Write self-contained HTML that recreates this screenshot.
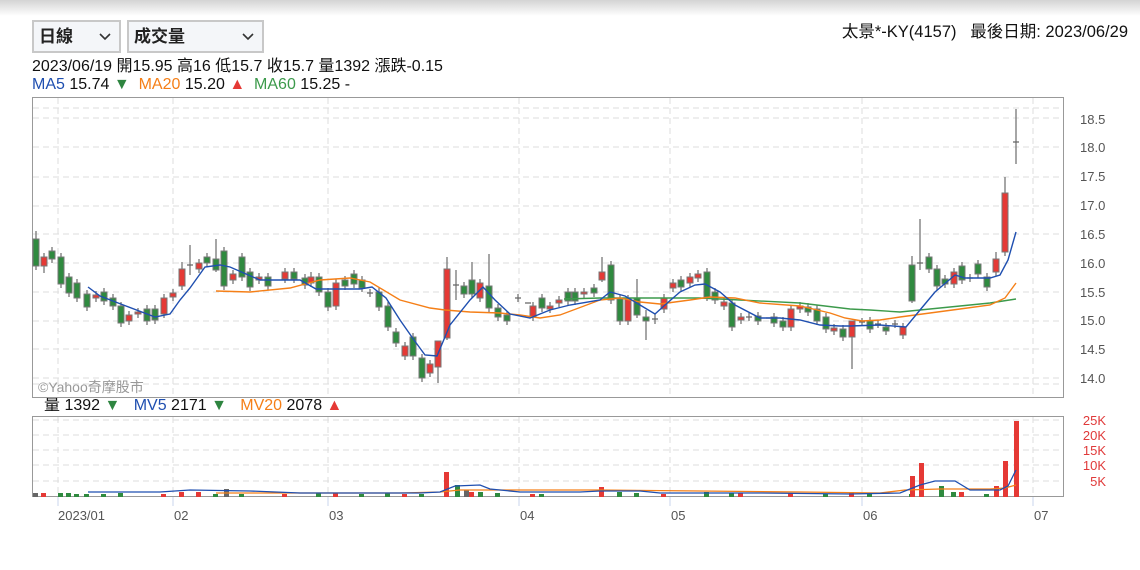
<!DOCTYPE html>
<html><head><meta charset="utf-8"><style>
body{margin:0;width:1140px;height:570px;background:#fff;font-family:"Liberation Sans","Noto Sans CJK TC",sans-serif;position:relative;overflow:hidden}
.top{position:absolute;left:0;top:0;width:1140px;height:16px;background:linear-gradient(#d4d4d4,#fff)}
.sel{position:absolute;top:20px;height:33px;background:#f4f6f9;border:2px solid #c8c8c8;box-sizing:border-box;font-size:17px;font-weight:bold;color:#222;line-height:29px;padding-left:5px}
.sel svg{position:absolute;right:8px;top:11px}
.t{position:absolute;font-size:16px;line-height:18px;color:#111;white-space:nowrap}
</style></head><body>
<div class="top"></div>
<div class="sel" style="left:32px;width:89px">日線<svg width="12" height="8"><path d="M1 1L6 6L11 1" stroke="#333" stroke-width="1.6" fill="none"/></svg></div>
<div class="sel" style="left:127px;width:137px">成交量<svg width="12" height="8"><path d="M1 1L6 6L11 1" stroke="#333" stroke-width="1.6" fill="none"/></svg></div>
<div class="t" style="right:12px;top:23px;font-size:16.5px">太景*-KY(4157) &nbsp; 最後日期: 2023/06/29</div>
<div class="t" style="left:32px;top:58px">2023/06/19 開15.95 高16 低15.7 收15.7 量1392 漲跌-0.15</div>
<div class="t" style="left:32px;top:76px"><span style="color:#1f4fb0">MA5</span> 15.74 <span style="color:#2e8540">▼</span> &nbsp;<span style="color:#f57f17">MA20</span> 15.20 <span style="color:#e53935">▲</span> &nbsp;<span style="color:#3c9a4b">MA60</span> 15.25 -</div>
<div class="t" style="left:44px;top:397px"><span>量</span> 1392 <span style="color:#2e8540">▼</span> &nbsp; <span style="color:#1f4fb0">MV5</span> 2171 <span style="color:#2e8540">▼</span> &nbsp; <span style="color:#f57f17">MV20</span> 2078 <span style="color:#e53935">▲</span></div>
<svg width="1140" height="570" style="position:absolute;left:0;top:0" font-family="Liberation Sans,sans-serif">
<g stroke="#ddd" stroke-dasharray="6,4" stroke-width="1">
<path d="M33 108H1063M33 118H1063M33 147H1063M33 177H1063M33 206H1063M33 234H1063M33 263H1063M33 292H1063M33 321H1063M33 349H1063M33 378H1063M33 384H1063"/>
<path d="M58 98V396M173 98V396M328 98V396M519 98V396M670 98V396M862 98V396M1033 98V396"/>
<path d="M33 420H1063M33 435H1063M33 450H1063M33 465H1063M33 481H1063"/>
<path d="M58 417V496M173 417V496M328 417V496M519 417V496M670 417V496M862 417V496M1033 417V496"/>
</g>
<path d="M58 497V506M173 497V506M328 497V506M519 497V506M670 497V506M862 497V506M1033 497V506" stroke="#c8d4ee"/>
<rect x="32.5" y="97.5" width="1031" height="300" fill="none" stroke="#999"/>
<rect x="32.5" y="416.5" width="1031" height="80" fill="none" stroke="#999"/>
<text x="38" y="392" font-size="14" fill="#999">©Yahoo奇摩股市</text>
<g font-size="13" fill="#555">
<text x="1080" y="124">18.5</text><text x="1080" y="152">18.0</text><text x="1080" y="181">17.5</text><text x="1080" y="210">17.0</text><text x="1080" y="239">16.5</text><text x="1080" y="268">16.0</text><text x="1080" y="297">15.5</text><text x="1080" y="325">15.0</text><text x="1080" y="354">14.5</text><text x="1080" y="383">14.0</text>
<text x="58" y="520">2023/01</text><text x="174" y="520">02</text><text x="329" y="520">03</text><text x="520" y="520">04</text><text x="671" y="520">05</text><text x="863" y="520">06</text><text x="1034" y="520">07</text>
</g>
<g font-size="13" fill="#e03a3a" text-anchor="end">
<text x="1106" y="425">25K</text><text x="1106" y="440">20K</text><text x="1106" y="455">15K</text><text x="1106" y="470">10K</text><text x="1106" y="486">5K</text>
</g>
<path stroke="#777" stroke-width="1.3" fill="none" d="M36 231V270M44 253V273M52 247V263M61 253V288M69 273V297M77 279V302M87 290V311M96 291V302M104 288V305M113 294V310M121 302V327M129 311V325M138 308V318M147 305V325M155 305V324M164 294V318M173 289V301M182 262V290M190 245V275M199 259V273M207 253V267M216 239V272M224 247V290M233 270V284M242 253V281M250 268V291M259 273V284M268 273V290M285 268V283M294 268V283M305 274V289M311 272V287M319 273V296M328 288V311M336 279V310M345 276V290M354 270V288M362 276V292M370 289V297M379 288V311M388 302V331M396 328V347M405 342V360M413 333V360M422 354V382M430 360V377M438 341V383M447 257V340M456 270V300M464 282V298M472 262V298M480 279V302M489 254V312M498 304V321M507 311V325M518 294V302M533 302V321M542 294V312M550 302V313M559 296V307M568 288V305M575 288V305M584 288V298M594 284V297M602 257V282M611 261V304M620 295V325M628 295V325M637 279V318M646 310V340M655 314V324M664 294V313M673 279V292M681 276V291M690 273V287M698 270V282M707 268V301M715 288V304M724 298V310M732 299V331M741 313V324M749 313V321M758 312V325M774 313V327M783 317V331M791 305V331M800 302V313M808 303V316M817 305V325M826 313V333M834 324V335M843 325V341M852 321V369M862 318V326M870 317V333M878 320V328M886 323V335M895 320V328M903 323V339M912 256V303M920 219V270M929 253V273M937 265V290M945 275V288M954 268V288M962 262V284M970 274V282M978 260V278M987 273V291M996 252V276M1005 177V256M1016 109V164"/>
<path stroke="#666" stroke-width="1.3" d="M187 265H193M367 293H373M515 298H521M652 319H658M746 317H752M859 322H865M875 324H881M892 324H898M917 263H923M967 278H973M1013 142H1019M453 285H459M525 303H531M766 318H772"/>
<g fill="#2f8a3f" stroke="#777" stroke-width="1">
<rect x="33" y="239" width="6" height="27"/><rect x="49" y="251" width="6" height="8"/><rect x="58" y="257" width="6" height="27"/><rect x="66" y="277" width="6" height="16"/><rect x="74" y="283" width="6" height="15"/><rect x="84" y="294" width="6" height="13"/><rect x="101" y="292" width="6" height="9"/><rect x="110" y="298" width="6" height="8"/><rect x="118" y="306" width="6" height="17"/><rect x="144" y="309" width="6" height="12"/><rect x="152" y="309" width="6" height="11"/><rect x="204" y="257" width="6" height="6"/><rect x="213" y="259" width="6" height="11"/><rect x="221" y="251" width="6" height="35"/><rect x="239" y="257" width="6" height="20"/><rect x="247" y="272" width="6" height="15"/><rect x="265" y="277" width="6" height="9"/><rect x="291" y="272" width="6" height="7"/><rect x="302" y="278" width="6" height="7"/><rect x="316" y="277" width="6" height="15"/><rect x="325" y="292" width="6" height="15"/><rect x="342" y="280" width="6" height="6"/><rect x="351" y="274" width="6" height="10"/><rect x="359" y="280" width="6" height="8"/><rect x="376" y="292" width="6" height="15"/><rect x="385" y="306" width="6" height="21"/><rect x="393" y="332" width="6" height="11"/><rect x="410" y="337" width="6" height="19"/><rect x="419" y="358" width="6" height="20"/><rect x="461" y="286" width="6" height="8"/><rect x="469" y="280" width="6" height="14"/><rect x="486" y="286" width="6" height="22"/><rect x="495" y="308" width="6" height="9"/><rect x="504" y="315" width="6" height="6"/><rect x="539" y="298" width="6" height="10"/><rect x="565" y="292" width="6" height="9"/><rect x="572" y="292" width="6" height="9"/><rect x="591" y="288" width="6" height="5"/><rect x="608" y="265" width="6" height="35"/><rect x="617" y="299" width="6" height="22"/><rect x="634" y="298" width="6" height="17"/><rect x="643" y="317" width="6" height="4"/><rect x="678" y="280" width="6" height="7"/><rect x="704" y="272" width="6" height="25"/><rect x="712" y="292" width="6" height="8"/><rect x="729" y="303" width="6" height="24"/><rect x="755" y="316" width="6" height="5"/><rect x="771" y="317" width="6" height="6"/><rect x="780" y="321" width="6" height="6"/><rect x="805" y="307" width="6" height="5"/><rect x="814" y="309" width="6" height="12"/><rect x="823" y="317" width="6" height="12"/><rect x="840" y="329" width="6" height="8"/><rect x="867" y="321" width="6" height="8"/><rect x="883" y="327" width="6" height="4"/><rect x="909" y="265" width="6" height="36"/><rect x="926" y="257" width="6" height="12"/><rect x="934" y="269" width="6" height="17"/><rect x="942" y="279" width="6" height="5"/><rect x="959" y="266" width="6" height="14"/><rect x="975" y="264" width="6" height="10"/><rect x="984" y="277" width="6" height="10"/>
</g>
<g fill="#e53935" stroke="#777" stroke-width="1">
<rect x="41" y="257" width="6" height="9"/><rect x="93" y="295" width="6" height="3"/><rect x="126" y="315" width="6" height="6"/><rect x="135" y="312" width="6" height="2"/><rect x="161" y="298" width="6" height="16"/><rect x="170" y="293" width="6" height="4"/><rect x="179" y="269" width="6" height="17"/><rect x="196" y="263" width="6" height="6"/><rect x="230" y="274" width="6" height="6"/><rect x="256" y="277" width="6" height="3"/><rect x="282" y="272" width="6" height="7"/><rect x="308" y="277" width="6" height="6"/><rect x="333" y="283" width="6" height="23"/><rect x="402" y="346" width="6" height="10"/><rect x="427" y="364" width="6" height="9"/><rect x="435" y="341" width="6" height="26"/><rect x="444" y="269" width="6" height="69"/><rect x="477" y="283" width="6" height="15"/><rect x="530" y="306" width="6" height="11"/><rect x="547" y="306" width="6" height="3"/><rect x="556" y="300" width="6" height="3"/><rect x="581" y="292" width="6" height="2"/><rect x="599" y="272" width="6" height="8"/><rect x="625" y="299" width="6" height="22"/><rect x="661" y="298" width="6" height="11"/><rect x="670" y="283" width="6" height="5"/><rect x="687" y="277" width="6" height="6"/><rect x="695" y="274" width="6" height="4"/><rect x="721" y="302" width="6" height="4"/><rect x="738" y="317" width="6" height="3"/><rect x="788" y="309" width="6" height="18"/><rect x="797" y="306" width="6" height="3"/><rect x="831" y="328" width="6" height="3"/><rect x="849" y="321" width="6" height="16"/><rect x="900" y="327" width="6" height="8"/><rect x="951" y="272" width="6" height="12"/><rect x="993" y="259" width="6" height="13"/><rect x="1002" y="193" width="6" height="59"/>
</g>
<g fill="none" stroke-width="1.4">
<polyline stroke="#3c9a4b" points="564,299 600,298 650,298 700,298 740,300 800,303 850,309 870,310 900,312 930,309 960,306 990,303 1016,299"/>
<polyline stroke="#f57f17" points="216,291 250,292 290,288 320,280 350,278 370,282 400,300 430,308 445,310 470,312 500,313 520,315 540,318 560,315 600,300 620,298 640,302 660,304 690,300 710,297 735,298 760,303 800,306 830,313 845,318 862,321 880,320 900,317 930,313 960,309 990,305 1005,298 1016,283"/>
<polyline stroke="#1f4fb0" points="88,287 100,296 126,306 155,317 170,314 180,300 190,288 205,267 220,265 230,267 260,280 300,280 316,289 340,289 360,289 372,287 386,298 400,320 414,340 425,355 437,356 450,325 470,300 483,287 495,300 510,314 530,318 550,310 570,305 600,300 610,292 625,296 640,305 655,314 665,305 680,292 695,285 705,284 720,292 735,305 760,318 780,318 800,320 820,325 840,326 850,326 880,325 906,327 920,310 935,292 955,275 965,278 990,278 1000,275 1008,260 1016,232"/>
</g>
<g fill="#2f8a3f">
<rect x="58" y="493" width="5" height="4"/><rect x="66" y="493" width="5" height="4"/><rect x="74" y="494" width="5" height="3"/><rect x="84" y="494" width="5" height="3"/><rect x="101" y="494" width="5" height="3"/><rect x="118" y="493" width="5" height="4"/><rect x="213" y="494" width="5" height="3"/><rect x="239" y="494" width="5" height="3"/><rect x="316" y="493" width="5" height="4"/><rect x="359" y="494" width="5" height="3"/><rect x="385" y="493" width="5" height="4"/><rect x="419" y="494" width="5" height="3"/><rect x="455" y="485" width="5" height="12"/><rect x="478" y="492" width="5" height="5"/><rect x="495" y="493" width="5" height="4"/><rect x="539" y="494" width="5" height="3"/><rect x="617" y="492" width="5" height="5"/><rect x="634" y="493" width="5" height="4"/><rect x="704" y="492" width="5" height="5"/><rect x="729" y="493" width="5" height="4"/><rect x="823" y="494" width="5" height="3"/><rect x="867" y="494" width="5" height="3"/><rect x="909" y="494" width="5" height="3"/><rect x="939" y="486" width="5" height="11"/><rect x="951" y="492" width="5" height="5"/><rect x="984" y="494" width="5" height="3"/>
</g>
<g fill="#e53935">
<rect x="41" y="493" width="5" height="4"/><rect x="161" y="494" width="5" height="3"/><rect x="179" y="492" width="5" height="5"/><rect x="196" y="492" width="5" height="5"/><rect x="282" y="494" width="5" height="3"/><rect x="333" y="493" width="5" height="4"/><rect x="402" y="494" width="5" height="3"/><rect x="444" y="472" width="5" height="25"/><rect x="469" y="492" width="5" height="5"/><rect x="530" y="494" width="5" height="3"/><rect x="599" y="487" width="5" height="10"/><rect x="661" y="494" width="5" height="3"/><rect x="738" y="493" width="5" height="4"/><rect x="788" y="493" width="5" height="4"/><rect x="849" y="492" width="5" height="5"/><rect x="910" y="476" width="5" height="21"/><rect x="919" y="463" width="5" height="34"/><rect x="959" y="492" width="5" height="5"/><rect x="994" y="486" width="5" height="11"/><rect x="1003" y="461" width="5" height="36"/><rect x="1014" y="421" width="5" height="76"/>
</g>
<g fill="#666"><rect x="33" y="493" width="5" height="4"/><rect x="224" y="489" width="5" height="8"/><rect x="464" y="490" width="5" height="7"/></g>
<g fill="none" stroke-width="1.3">
<polyline stroke="#f57f17" points="216,493 400,493 440,492 460,490 500,490 600,490 700,491 800,492 880,493 905,490 940,489 990,489 1005,488 1016,485"/>
<polyline stroke="#1f4fb0" points="88,492 160,492 190,490 250,491 300,493 420,493 440,492 455,486 480,485 490,489 520,492 580,492 600,491 640,491 660,493 700,493 760,493 850,494 900,493 920,485 935,481 955,481 970,490 1000,490 1008,486 1016,470"/>
</g>
</svg>
</body></html>
